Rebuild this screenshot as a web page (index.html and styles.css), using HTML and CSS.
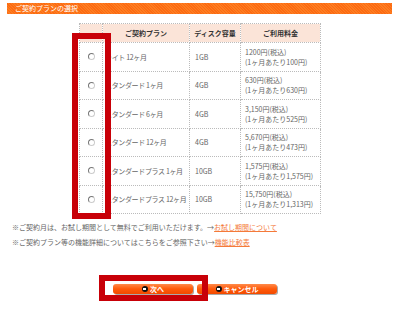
FILE: index.html
```html
<!DOCTYPE html>
<html lang="ja">
<head>
    <meta charset="UTF-8">
    <title>ご契約プランの選択</title>
    <link rel="stylesheet" href="styles.css">
</head>
<body>
    <div class="page">
        <h2 class="section-title">ご契約プランの選択</h2>

        <table class="plans">
            <thead>
                <tr>
                    <th class="col-radio"></th>
                    <th class="col-plan">ご契約プラン</th>
                    <th class="col-disk">ディスク容量</th>
                    <th class="col-price">ご利用料金</th>
                </tr>
            </thead>
            <tbody>
                <tr>
                    <td class="col-radio"><input type="radio" name="plan"></td>
                    <td class="col-plan">ライト 12ヶ月</td>
                    <td class="col-disk">1GB</td>
                    <td class="col-price">1200円(税込)<br>(1ヶ月あたり100円)</td>
                </tr>
                <tr>
                    <td class="col-radio"><input type="radio" name="plan"></td>
                    <td class="col-plan">スタンダード 1ヶ月</td>
                    <td class="col-disk">4GB</td>
                    <td class="col-price">630円(税込)<br>(1ヶ月あたり630円)</td>
                </tr>
                <tr>
                    <td class="col-radio"><input type="radio" name="plan"></td>
                    <td class="col-plan">スタンダード 6ヶ月</td>
                    <td class="col-disk">4GB</td>
                    <td class="col-price">3,150円(税込)<br>(1ヶ月あたり525円)</td>
                </tr>
                <tr>
                    <td class="col-radio"><input type="radio" name="plan"></td>
                    <td class="col-plan">スタンダード 12ヶ月</td>
                    <td class="col-disk">4GB</td>
                    <td class="col-price">5,670円(税込)<br>(1ヶ月あたり473円)</td>
                </tr>
                <tr>
                    <td class="col-radio"><input type="radio" name="plan"></td>
                    <td class="col-plan">スタンダードプラス 1ヶ月</td>
                    <td class="col-disk">10GB</td>
                    <td class="col-price">1,575円(税込)<br>(1ヶ月あたり1,575円)</td>
                </tr>
                <tr>
                    <td class="col-radio"><input type="radio" name="plan"></td>
                    <td class="col-plan">スタンダードプラス 12ヶ月</td>
                    <td class="col-disk">10GB</td>
                    <td class="col-price">15,750円(税込)<br>(1ヶ月あたり1,313円)</td>
                </tr>
            </tbody>
        </table>

        <ul class="notes">
            <li>※ご契約月は、お試し期間として無料でご利用いただけます。→<a href="#">お試し期間について</a></li>
            <li>※ご契約プラン等の機能詳細についてはこちらをご参照下さい→<a href="#">機能比較表</a></li>
        </ul>

        <div class="actions">
            <a href="#" class="btn"><span class="btn-icon"></span>次へ</a>
            <a href="#" class="btn"><span class="btn-icon"></span>キャンセル</a>
        </div>

        <!-- annotation frames -->
        <div class="mark mark-radio"></div>
        <div class="mark mark-next"></div>
    </div>
</body>
</html>
```

FILE: styles.css
```css
* {
    box-sizing: border-box;
    margin: 0;
    padding: 0;
}

body {
    font-family: "Noto Sans CJK JP", "DejaVu Sans", sans-serif;
    font-size: 8px;
    color: #666;
    background: #fff;
}

.page {
    position: relative;
    width: 399px;
    height: 322px;
    padding-top: 3px;
}

/* Title bar */
.section-title {
    margin-left: 7px;
    width: 385px;
    height: 11px;
    line-height: 11px;
    padding-left: 8px;
    font-size: 7px;
    font-weight: normal;
    color: #fff;
    background: #fc6a12;
    background-image: repeating-linear-gradient(45deg, rgba(255, 160, 60, 0.35) 0 1px, transparent 1px 2px);
}

/* Plan table */
.plans {
    margin: 9px 0 0 79px;
    border-collapse: collapse;
    table-layout: fixed;
    width: 241px;
}

.plans th,
.plans td {
    border: 1px dotted #bbb;
    padding: 0;
    white-space: nowrap;
    overflow: hidden;
}

.plans th {
    height: 19px;
    background: #fbe4d8;
    color: #333;
    font-size: 7px;
    text-align: center;
}

.plans td {
    height: 28.5px;
    line-height: 10px;
    font-size: 7px;
}

.col-radio { width: 23px; text-align: center; }
.col-plan { width: 87px; }
.col-disk { width: 51px; }
.col-price { width: 80px; }

td.col-plan { padding-left: 2px; letter-spacing: -0.35px; }
td.col-disk { padding-left: 5px; }
td.col-price { padding-left: 4px; }

.plans input[type="radio"] {
    appearance: none;
    display: block;
    margin: 0 auto;
    width: 7px;
    height: 7px;
    border: 1px solid #777;
    border-right-color: #ccc;
    border-bottom-color: #ccc;
    border-radius: 50%;
    background: #fff;
}

/* Notes */
.notes {
    list-style: none;
    margin: 6px 0 0 12px;
    font-size: 7px;
    line-height: 15px;
}

.notes a {
    color: #f47a3a;
}

/* Buttons */
.actions {
    display: flex;
    gap: 4px;
    margin: 34px 0 0 113px;
}

.btn {
    display: flex;
    align-items: center;
    justify-content: center;
    gap: 2px;
    width: 80px;
    height: 10px;
    border-radius: 3px;
    background: linear-gradient(#ff8a4a, #ff5a0a 50%, #f24a00);
    box-shadow: 1px 1px 0 #aaa;
    color: #fff;
    font-size: 7px;
    font-weight: bold;
    text-decoration: none;
}

.btn-icon {
    position: relative;
    width: 6px;
    height: 6px;
    border-radius: 50%;
    background: #111;
}

.btn-icon::after {
    content: "";
    position: absolute;
    left: 1px;
    top: 2px;
    width: 3px;
    height: 2px;
    background: #fff;
}

/* Red annotation frames */
.mark {
    position: absolute;
    border: 6px solid #c80008;
}

.mark-radio {
    left: 72px;
    top: 33px;
    width: 39px;
    height: 186px;
}

.mark-next {
    left: 99px;
    top: 275px;
    width: 109px;
    height: 26px;
}
```
